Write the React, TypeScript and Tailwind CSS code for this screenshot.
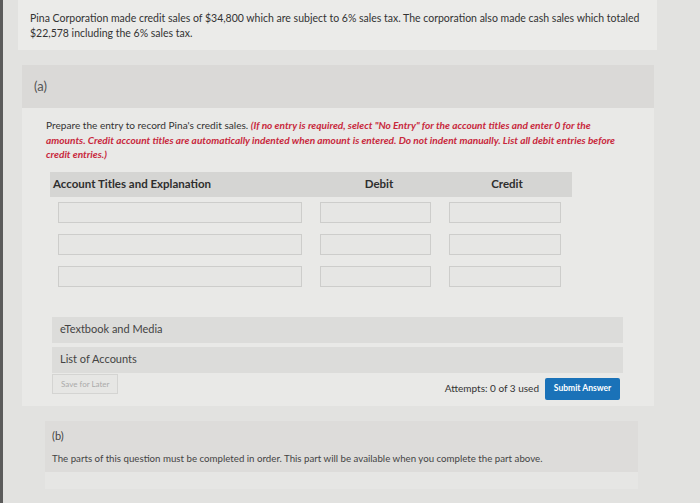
import React from "react";

const InputRow: React.FunctionComponent<{}> = () => {
  return (
    <div className="flex items-center h-[32px] pl-[8px]">
      <div className="w-[244px] h-[21px] border border-[#cdcdcb] bg-[#e6e6e4]" />
      <div className="ml-[18px] w-[111px] h-[21px] border border-[#cdcdcb] bg-[#e6e6e4]" />
      <div className="ml-[18px] w-[112px] h-[21px] border border-[#cdcdcb] bg-[#e6e6e4]" />
    </div>
  );
};

const App: React.FunctionComponent<{}> = () => {
  return (
    <div className="min-h-[503px] w-[700px] bg-[#e2e2e0] border-l-[3px] border-[#5b5b5b] font-[Lato,'Liberation_Sans',sans-serif] text-[#3a3a3a] overflow-hidden">
      <div className="ml-[15px] w-[639px] bg-[#ebebe9] px-[12px] pt-[11px] pb-[9px] text-[10.5px] leading-[15px] text-[#333]">
        Pina Corporation made credit sales of $34,800 which are subject to 6% sales tax. The corporation also made cash sales which totaled
        <br />
        $22,578 including the 6% sales tax.
      </div>

      <section className="mt-[15px] ml-[19px] w-[632px]">
        <div className="h-[43px] bg-[#dad9d7] px-[12px] flex items-center text-[13px] text-[#555]">
          (a)
        </div>
        <div className="bg-[#e9e9e7] pl-[24px] pr-[20px] pt-[10px] pb-[6px]">
          <p className="text-[10.1px] leading-[14.5px] text-[#333]">
            Prepare the entry to record Pina's credit sales.{" "}
            <span className="italic font-bold text-[#c8283c]">
              (If no entry is required, select "No Entry" for the account titles and enter 0 for the
              <br />
              amounts. Credit account titles are automatically indented when amount is entered. Do not indent manually. List all debit entries before
              <br />
              credit entries.)
            </span>
          </p>

          <div className="mt-[10px] ml-[4px] w-[522px]">
            <div className="h-[25px] bg-[#d5d5d3] flex items-center text-[11.5px] font-bold text-[#2e2e2e]">
              <div className="w-[266px] pl-[3px]">Account Titles and Explanation</div>
              <div className="w-[126px] text-center">Debit</div>
              <div className="w-[130px] text-center">Credit</div>
            </div>
            <div>
              <InputRow />
              <InputRow />
              <InputRow />
            </div>
          </div>

          <div className="mt-[24px] ml-[6px] w-[571px] flex flex-col gap-[4px]">
            <div className="h-[26px] bg-[#dcdcda] flex items-center px-[8px] text-[11px] text-[#444]">
              eTextbook and Media
            </div>
            <div className="h-[26px] bg-[#dcdcda] flex items-center px-[8px] text-[11px] text-[#444]">
              List of Accounts
            </div>
          </div>

          <div className="ml-[6px] w-[571px] flex items-start justify-between">
            <button className="mt-[1px] h-[20px] px-[8px] border border-[#d4d4d2] bg-[#e6e6e4] text-[8px] text-[#aaa]">
              Save for Later
            </button>
            <div className="flex items-center mt-[5px] mr-[3px]">
              <span className="text-[10px] text-[#333]">Attempts: 0 of 3 used</span>
              <button className="ml-[6px] h-[22px] w-[75px] bg-[#1a72b8] rounded-[2px] text-[8.5px] font-bold text-white">
                Submit Answer
              </button>
            </div>
          </div>
        </div>
      </section>

      <section className="mt-[15px] ml-[42px] w-[593px]">
        <div className="h-[51px] bg-[#dddcda] px-[7px] pt-[8px]">
          <div className="text-[11px] text-[#444] leading-[14px]">(b)</div>
          <div className="mt-[9px] text-[9.7px] text-[#444] leading-[12px]">
            The parts of this question must be completed in order. This part will be available when you complete the part above.
          </div>
        </div>
        <div className="h-[17px] bg-[#e6e6e4]" />
      </section>
    </div>
  );
};

export default App;
